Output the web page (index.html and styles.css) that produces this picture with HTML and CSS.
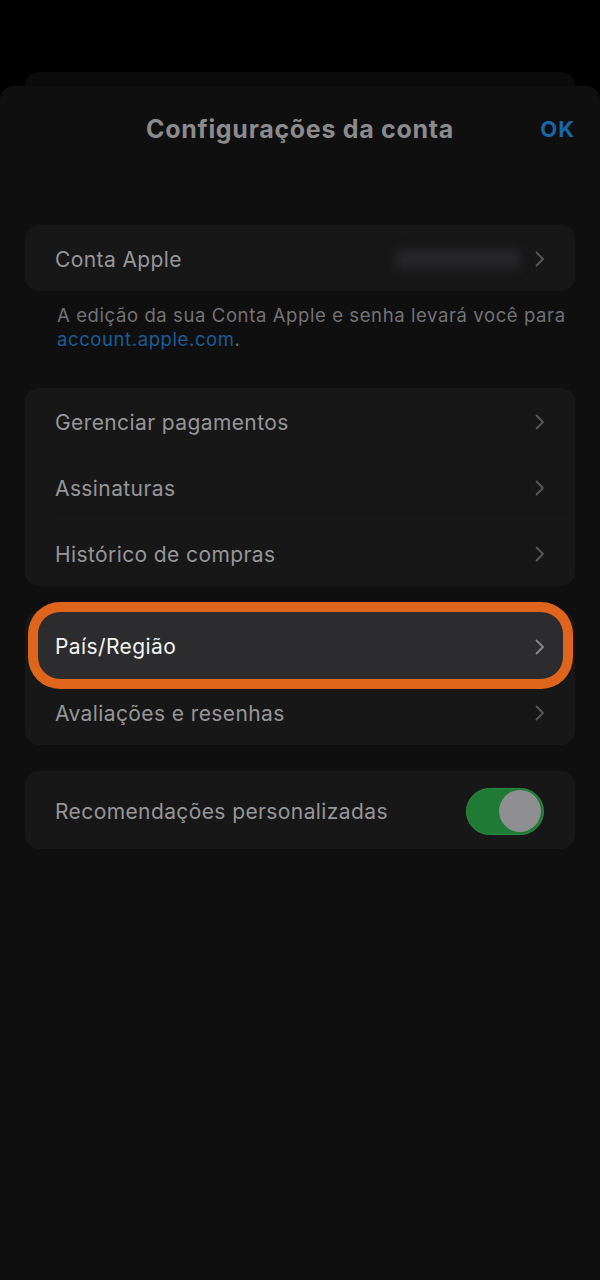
FILE: index.html
```html
<!DOCTYPE html>
<html lang="pt-BR">
<head>
<meta charset="utf-8">
<title>Configurações da conta</title>
<link rel="stylesheet" href="styles.css">
</head>
<body>
<div class="screen">
  <div class="backcard"></div>
  <div class="sheet">
    <header class="header">
      <span></span>
      <h1 class="title">Configurações da conta</h1>
      <span class="ok">OK</span>
    </header>

    <section class="card">
      <div class="row">
        <span class="label">Conta Apple</span>
        <span class="trail">
          <span class="blurred"></span>
          <svg class="chev" viewBox="0 0 10 16" width="10" height="16"><polyline points="1.5,1.5 8,8 1.5,14.5"/></svg>
        </span>
      </div>
    </section>
    <p class="note">A edição da sua Conta Apple e senha levará você para<br><a class="link">account.apple.com</a>.</p>

    <section class="card group">
      <div class="row sep">
        <span class="label">Gerenciar pagamentos</span>
        <svg class="chev" viewBox="0 0 10 16" width="10" height="16"><polyline points="1.5,1.5 8,8 1.5,14.5"/></svg>
      </div>
      <div class="row sep">
        <span class="label">Assinaturas</span>
        <svg class="chev" viewBox="0 0 10 16" width="10" height="16"><polyline points="1.5,1.5 8,8 1.5,14.5"/></svg>
      </div>
      <div class="row">
        <span class="label">Histórico de compras</span>
        <svg class="chev" viewBox="0 0 10 16" width="10" height="16"><polyline points="1.5,1.5 8,8 1.5,14.5"/></svg>
      </div>
    </section>

    <section class="card group">
      <div class="row highlight">
        <span class="label">País/Região</span>
        <svg class="chev" viewBox="0 0 10 16" width="10" height="16"><polyline points="1.5,1.5 8,8 1.5,14.5"/></svg>
      </div>
      <div class="row">
        <span class="label">Avaliações e resenhas</span>
        <svg class="chev" viewBox="0 0 10 16" width="10" height="16"><polyline points="1.5,1.5 8,8 1.5,14.5"/></svg>
      </div>
    </section>

    <section class="card group">
      <div class="row tall">
        <span class="label">Recomendações personalizadas</span>
        <span class="toggle"><span class="knob"></span></span>
      </div>
    </section>
  </div>
</div>
</body>
</html>
```

FILE: styles.css
```css
* { box-sizing: border-box; }

html, body {
  margin: 0;
  padding: 0;
  background: #000;
}

body {
  font-family: Inter, "Noto Sans", "Liberation Sans", sans-serif;
  width: 600px;
  height: 1280px;
  overflow: hidden;
}

.screen {
  padding-top: 72px;
  height: 1280px;
  display: flex;
  flex-direction: column;
}

.backcard {
  height: 14px;
  margin: 0 25px;
  background: #0b0b0c;
  border-radius: 14px 14px 0 0;
}

.sheet {
  flex: 1;
  background: #0f0f10;
  border-radius: 14px 14px 0 0;
  padding: 0 25px;
}

.header {
  height: 86px;
  display: grid;
  grid-template-columns: 1fr auto 1fr;
  align-items: center;
}

.title {
  margin: 0;
  font-size: 25px;
  font-weight: 700;
  color: #8b8b8d;
  letter-spacing: 0.7px;
}

.ok {
  justify-self: end;
  font-size: 22px;
  font-weight: 700;
  letter-spacing: 1px;
  color: #1a65a8;
}

.card {
  background: #171718;
  border-radius: 14px;
  margin-top: 53px;
}

.card.group {
  margin-top: 26px;
}

.note + .card.group {
  margin-top: 37px;
}

.row {
  height: 66px;
  display: flex;
  align-items: center;
  justify-content: space-between;
  padding: 2px 30px 0 30px;
  position: relative;
}

.row.tall {
  height: 78px;
  padding-right: 31px;
}

.row.sep::after {
  content: "";
  position: absolute;
  left: 30px;
  right: 0;
  bottom: 0;
  height: 1px;
  background: #19191b;
}

.label {
  font-size: 21px;
  letter-spacing: 0.4px;
  color: #969698;
  position: relative;
  z-index: 1;
}

.trail {
  display: flex;
  align-items: center;
  gap: 14px;
}

.blurred {
  width: 126px;
  height: 20px;
  border-radius: 8px;
  background: #262628;
  filter: blur(5px);
}

.chev {
  display: block;
  fill: none;
  stroke: #58585b;
  stroke-width: 1.8;
  stroke-linecap: round;
  stroke-linejoin: round;
  position: relative;
  z-index: 1;
}

.note {
  margin: 12px 0 0 32px;
  font-size: 18.5px;
  letter-spacing: 0.6px;
  line-height: 24px;
  color: #737375;
}

.link {
  color: #1b5c96;
}

.highlight {
  height: 67px;
}

.highlight::before {
  content: "";
  position: absolute;
  top: 0;
  bottom: 0;
  left: 13px;
  right: 12px;
  background: #2c2c2e;
  border-radius: 22px;
  box-shadow: 0 0 0 10px #e0651c;
}

.highlight .label {
  color: #f4f4f5;
}

.highlight .chev {
  stroke: #8a8a8d;
}

.toggle {
  width: 78px;
  height: 47px;
  border-radius: 24px;
  background: #1e7a34;
  border: 1px solid #2a8c3f;
  display: flex;
  align-items: center;
  justify-content: flex-end;
  padding-right: 2px;
}

.knob {
  width: 42px;
  height: 42px;
  border-radius: 50%;
  background: #8f8f91;
}
```
